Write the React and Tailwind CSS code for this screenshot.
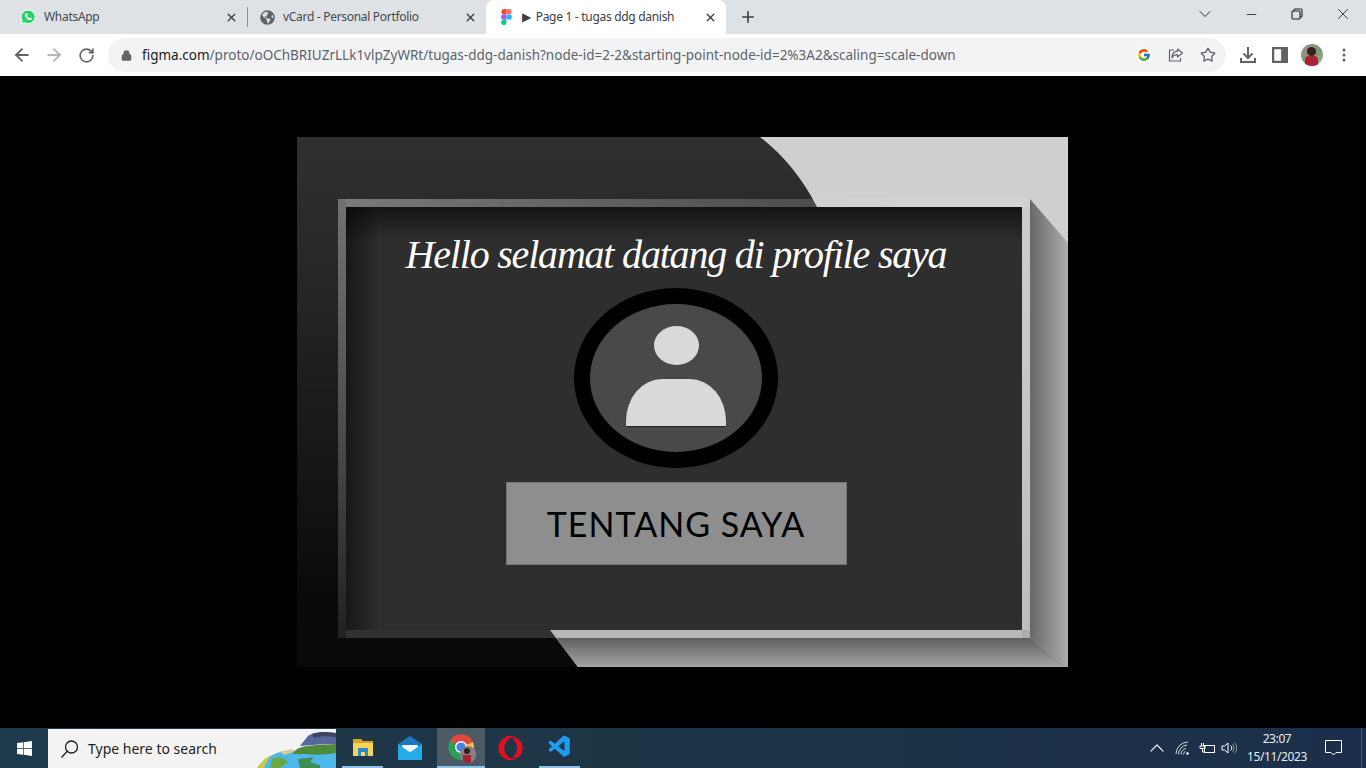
import React from "react";
import { ArrowLeft, ArrowRight, RotateCw, Lock, Star, X, Plus, ChevronDown, Minus, ChevronUp } from "lucide-react";
import { FaGlobeAmericas, FaWindows, FaOpera } from "react-icons/fa";
import { FcGoogle } from "react-icons/fc";
import { VscVscode } from "react-icons/vsc";

const UI = "font-['Noto_Sans','Open_Sans',sans-serif]";

function Tab({ icon, title, active, sep, width }) {
  return (
    <div className={`relative flex h-full shrink-0 items-center pl-3 pr-[9px] ${width} ${active ? "rounded-t-lg bg-white text-[#3c4043]" : "text-[#45494d]"}`}>
      <span className="flex w-4 shrink-0 items-center justify-center">{icon}</span>
      <span className="ml-2 flex-1 truncate text-xs tracking-[-0.3px]">{title}</span>
      <X size={13} strokeWidth={2.6} className="shrink-0 text-[#3c4043]" />
      {sep && <span className="absolute -right-px top-[7px] h-5 w-px bg-[#8b8f93]" />}
    </div>
  );
}

function WhatsAppLogo() {
  return (
    <svg width="16" height="16" viewBox="0 0 16 16">
      <path d="M8 .500a7.300 7.300 0 0 0-6.300 11L.800 15.300l3.900-1A7.300 7.300 0 1 0 8 .500z" fill="#fff" />
      <path d="M8 1.500a6.400 6.400 0 0 0-5.400 9.800L2 14l2.800-.7A6.400 6.400 0 1 0 8 1.500z" fill="#25d366" />
      <path d="M5.600 4.400c-1.100.8-.8 2.900 1 4.800s3.900 2.400 4.900 1.300c.4-.5.400-1 .2-1.200l-1.500-.8-.8.800c-.9-.3-1.900-1.300-2.300-2.200l.7-.8-.7-1.700c-.2-.3-.9-.4-1.500-.2z" fill="#fff" />
    </svg>
  );
}

function FigmaLogo() {
  return (
    <svg width="11" height="16" viewBox="0 0 11 16">
      <path d="M5.500 0H2.750a2.670 2.670 0 0 0 0 5.330H5.500z" fill="#f24e1e" />
      <path d="M5.500 0h2.750a2.670 2.670 0 0 1 0 5.330H5.500z" fill="#ff7262" />
      <path d="M5.500 5.330H2.750a2.670 2.670 0 0 0 0 5.340H5.500z" fill="#a259ff" />
      <circle cx="8.200" cy="8" r="2.670" fill="#1abcfe" />
      <path d="M2.750 10.670H5.500v2.660a2.700 2.700 0 1 1-2.750-2.660z" fill="#0acf83" />
    </svg>
  );
}

function WindowControls() {
  return (
    <div className="ml-auto flex h-full items-start text-[#1f1f1f]">
      <div className="flex h-7 w-[46px] items-center justify-center"><ChevronDown size={20} strokeWidth={1.1} /></div>
      <div className="flex h-7 w-[46px] items-center justify-center"><Minus size={15} strokeWidth={1.3} /></div>
      <div className="flex h-7 w-[46px] items-center justify-center">
        <svg width="12" height="12" viewBox="0 0 12 12" fill="none" stroke="currentColor" strokeWidth="1.100">
          <rect x="1" y="3" width="8" height="8" rx="1" /><path d="M3 3V2a1 1 0 0 1 1-1h6a1 1 0 0 1 1 1v6a1 1 0 0 1-1 1H9" />
        </svg>
      </div>
      <div className="flex h-7 w-[46px] items-center justify-center"><X size={18} strokeWidth={1.1} /></div>
    </div>
  );
}

function Toolbar() {
  return (
    <div className={`flex h-[42px] shrink-0 items-center bg-white pl-[12px] ${UI}`}>
      <ArrowLeft size={20} strokeWidth={2.2} className="text-[#5f6368]" />
      <ArrowRight size={20} strokeWidth={2.2} className="ml-3 text-[#b3b6ba]" />
      <RotateCw size={17} strokeWidth={2.3} className="ml-[14px] text-[#5f6368]" />
      <div className="ml-[13px] flex h-[34px] w-[1118px] items-center rounded-full bg-[#f1f3f4] pl-[13px]">
        <Lock size={11} strokeWidth={3} className="text-[#5f6368]" fill="#5f6368" />
        <div className="ml-[10px] pt-[2px] text-[13.5px] leading-none tracking-[0.005px] text-[#5f6368]">
          <span className="text-[#202124]">figma.com</span>/proto/oOChBRIUZrLLk1vlpZyWRt/tugas-ddg-danish?node-id=2-2&amp;starting-point-node-id=2%3A2&amp;scaling=scale-down
        </div>
        <div className="ml-auto flex items-center gap-4 pr-[10px] text-[#5f6368]">
          <span className="flex h-4 w-4 items-center justify-center rounded-full bg-white"><FcGoogle size={14} /></span>
          <svg width="16" height="16" viewBox="0 0 16 16" fill="none" stroke="#5f6368" strokeWidth="1.200">
            <path d="M6 3H1.500v11h11v-3" /><path d="M9.500 2l5 4-5 4V7.700C7 7.700 5 8.600 4 11c0-4 2-6.500 5.500-6.800z" strokeLinejoin="round" />
          </svg>
          <Star size={16} strokeWidth={1.9} />
        </div>
      </div>
      <div className="ml-[14px] flex items-center text-[#5f6368]">
        <svg width="16" height="16" viewBox="0 0 16 16" fill="none" stroke="currentColor" strokeWidth="2">
          <path d="M8 0v10M3.500 6.500L8 11l4.500-4.500M1 11v4h14v-4" />
        </svg>
        <svg className="ml-4" width="16" height="16" viewBox="0 0 14 14">
          <path fillRule="evenodd" d="M0 0h14v14H0zM2 2v10h6V2z" fill="#5f6368" />
        </svg>
        <span className="relative ml-[13px] h-[22px] w-[22px] overflow-hidden rounded-full bg-[linear-gradient(135deg,#a98aa0,#7f9a6a_55%,#a5b5a8)]">
          <span className="absolute left-[6px] top-[3px] h-[9px] w-[9px] rounded-full bg-[#35211e]" />
          <span className="absolute bottom-0 left-[4px] h-[10px] w-[13px] rounded-t bg-[#b02035]" />
        </span>
        <svg className="ml-[19px]" width="4" height="14" viewBox="0 0 4 14" fill="#5f6368">
          <circle cx="2" cy="2" r="1.500" /><circle cx="2" cy="7" r="1.500" /><circle cx="2" cy="12" r="1.500" />
        </svg>
      </div>
    </div>
  );
}

function Art() {
  return (
    <svg className="absolute inset-0 h-full w-full" viewBox="0 0 771 530">
      <defs>
        <linearGradient id="sr" gradientUnits="userSpaceOnUse" x1="733" y1="0" x2="771" y2="0">
          <stop offset="0" stopColor="#686868" /><stop offset="1" stopColor="#acacac" />
        </linearGradient>
        <linearGradient id="sb" gradientUnits="userSpaceOnUse" x1="0" y1="501" x2="0" y2="530">
          <stop offset="0" stopColor="#5e5e5e" /><stop offset="1" stopColor="#a6a6a6" />
        </linearGradient>
      </defs>
      <path d="M463 0Q498 27 520 70L253 493L281 530H771V0Z" fill="#cfcfcf" />
      <path d="M733 62L771 106V530L733 501Z" fill="url(#sr)" />
      <path d="M259 501H733L771 530H281Z" fill="url(#sb)" />
    </svg>
  );
}

function Avatar() {
  return (
    <div className="mt-[4px] flex h-[180px] w-[204px] shrink-0 flex-col items-center rounded-[50%] border-[16px] border-black bg-[#494949] pt-[22px]">
      <div className="h-[39px] w-[45px] rounded-[50%] bg-[#d9d9d9]" />
      <div className="mt-[14px] h-[47px] w-[100px] bg-[#d9d9d9] shadow-[0_1px_1px_#222] [border-radius:36px_36px_0_0/42px_42px_0_0]" />
    </div>
  );
}

function Design() {
  return (
    <div className="relative flex h-[530px] w-[771px] bg-[linear-gradient(180deg,#303030,#272727_25%,#0a0a0a_88%,#090909)] pb-[29px] pl-[41px] pr-[38px] pt-[62px]">
      <Art />
      <div className="relative flex flex-1 p-2 [background:linear-gradient(90deg,#0000_8px,#dadada70_8px,#dadada30_70%,#dadada60)_top/100%_8px_no-repeat,linear-gradient(90deg,#0000_8px,#88888850_8px)_bottom/100%_8px_no-repeat,linear-gradient(180deg,#888888c0,#88888830)_left/8px_100%_no-repeat,linear-gradient(180deg,#88888808,#88888840)_right/8px_100%_no-repeat]">
        <div className="flex flex-1 flex-col items-center bg-[#2e2e2e] bg-[linear-gradient(180deg,#00000090,#00000000_34px),linear-gradient(90deg,#00000080,#00000000_34px)] pr-4 pt-[21px]">
          <h1 className="h-[56px] whitespace-nowrap font-['Liberation_Serif',serif] text-[40px] font-normal italic leading-[54px] tracking-[-1.2px] text-white">
            Hello selamat datang di profile saya
          </h1>
          <Avatar />
          <button className="mt-[14px] flex h-[83px] w-[341px] shrink-0 items-center justify-center border border-[#747474] bg-[#8e8e8e] font-['Lato',sans-serif] text-[34px] tracking-[1px] text-black">
            TENTANG SAYA
          </button>
        </div>
      </div>
    </div>
  );
}

function SearchArt() {
  return (
    <svg className="absolute bottom-0 right-0" width="82" height="39" viewBox="0 0 82 39">
      <path d="M3 39C10 30 20 24 30 22L82 20V39Z" fill="#4fb8ea" />
      <path d="M3 39C8 32 12 28 18 26C14 30 12 35 10 39Z" fill="#c8c84a" />
      <path d="M26 23L38 20L40 23L30 26Z" fill="#d9c79a" />
      <path d="M43 20C50 17 56 16 82 15V24C70 26 60 26 52 25L38 25Z" fill="#4d8a3a" />
      <path d="M46 17L54 7C58 3 70 3 82 4V15C66 15 56 16 46 17Z" fill="#56669a" />
      <path d="M58 5C66 2 74 3 82 4V8C74 7 66 7 60 9Z" fill="#3a4660" />
      <path d="M18 30C24 27 30 29 34 33L26 39H16Z" fill="#6aa842" />
      <path d="M44 30L60 28L56 33L66 36V39H46Z" fill="#3f8e55" />
    </svg>
  );
}

function ChromeIcon() {
  return (
    <span className="relative h-[26px] w-[26px]">
      <svg width="26" height="26" viewBox="0 0 26 26" className="absolute left-0 top-0">
        <path d="M13 13L2 6.500A13 13 0 0 1 25 8z" fill="#e2483d" />
        <path d="M13 13L25 8A13 13 0 0 1 13 26z" fill="#f5c33b" />
        <path d="M13 13L13 26A13 13 0 0 1 2 6.500z" fill="#2f9e55" />
        <circle cx="13" cy="13" r="6" fill="#fff" /><circle cx="13" cy="13" r="4.600" fill="#3f82ee" />
      </svg>
      <span className="absolute -bottom-[3px] -right-[2px] h-[17px] w-[16px] overflow-hidden rounded-full bg-[#8a7d86]">
        <span className="absolute left-1 top-[2px] h-[6px] w-[6px] rounded-full bg-[#32201d]" />
        <span className="absolute bottom-0 left-[3px] h-2 w-2 bg-[#a81f32]" />
      </span>
    </span>
  );
}

function TaskIcon({ children, w, cls = "" }) {
  return <div className={`flex h-full shrink-0 items-center justify-center ${w} ${cls}`}>{children}</div>;
}

function Taskbar() {
  return (
    <div className={`flex h-10 shrink-0 items-stretch bg-[linear-gradient(90deg,#1e3a4c,#1e3546_45%,#1b2f4a)] ${UI}`}>
      <TaskIcon w="w-12"><FaWindows size={17} className="text-white" /></TaskIcon>
      <div className="relative mt-px flex w-[288px] items-center overflow-hidden bg-[#f3f3f3] pl-3">
        <svg width="20" height="20" viewBox="0 0 20 20" fill="none" stroke="#1f1f1f" strokeWidth="1.300">
          <circle cx="11.500" cy="8" r="6" /><path d="M7 12.500L1.500 18.500" />
        </svg>
        <span className="ml-2 text-[14px] text-[#1f1f1f]">Type here to search</span>
        <SearchArt />
      </div>
      <TaskIcon w="w-[6px]" />
      <TaskIcon w="w-[41px]" cls="border-b-2 border-[#8cc3e6]">
        <svg width="22" height="20" viewBox="0 0 22 20">
          <path d="M1 2h8l2 2h10v3H1z" fill="#d9a520" /><path d="M1 6h20v13H1z" fill="#f8d35e" />
          <path d="M6 11h10v8h-3v-4H9v4H6z" fill="#2a8ad4" />
        </svg>
      </TaskIcon>
      <TaskIcon w="w-[54px]">
        <svg width="24" height="24" viewBox="0 0 24 24">
          <path d="M0 8L12 0l12 8v16H0z" fill="#1878c0" />
          <path d="M4 9h16v2.500l-8 5-8-5z" fill="#eef7fc" />
          <path d="M0 8l12 8.500L24 8v16H0z" fill="#25ace8" />
        </svg>
      </TaskIcon>
      <TaskIcon w="w-[48px]" cls="border-b-2 border-[#8cc3e6] bg-[#4b5b66]"><ChromeIcon /></TaskIcon>
      <TaskIcon w="w-[50px]"><FaOpera size={25} className="text-[#e4101f]" /></TaskIcon>
      <TaskIcon w="w-[4px]" />
      <TaskIcon w="w-[41px]" cls="border-b-2 border-[#8cc3e6]"><VscVscode size={26} className="text-[#1f9cf0]" /></TaskIcon>
      <div className="ml-auto flex items-center text-[#e8edf0]">
        <ChevronUp size={24} strokeWidth={1.2} />
        <svg className="ml-[6px]" width="15" height="15" viewBox="0 0 15 15" fill="none" stroke="#cfd6dc" strokeWidth="1">
          <path d="M1 13A12 12 0 0 1 13 1M3.500 13.500A9.500 9.500 0 0 1 12 4M6 13.500A6.500 6.500 0 0 1 11 7.500M8.500 13.500a3 3 0 0 1 2-3" /><circle cx="12.500" cy="12.500" r="1.300" fill="#fff" stroke="none" />
        </svg>
        <svg className="ml-[9px]" width="17" height="13" viewBox="0 0 17 13" fill="none" stroke="#fff" strokeWidth="1">
          <rect x="5.500" y="3.500" width="10" height="7" /><path d="M2.500 1v3M4.500 1v3M1 4h5v2.500H1zM3.500 7v3h2" />
        </svg>
        <svg className="ml-[5px]" width="17" height="14" viewBox="0 0 17 14" fill="none" stroke="#fff" strokeWidth="1">
          <path d="M1 5h2.500L7 2v10L3.500 9H1z" /><path d="M9.500 4.500a3 3 0 0 1 0 5" /><path d="M11.500 3a6 6 0 0 1 0 8M13.500 1.500a8 8 0 0 1 0 11" stroke="#8a949c" />
        </svg>
        <div className="ml-[4px] flex w-[70px] flex-col items-center text-xs leading-[18px] tracking-[-0.4px]">
          <span>23:07</span><span>15/11/2023</span>
        </div>
        <div className="ml-px flex w-10 justify-center">
          <svg width="17" height="16" viewBox="0 0 17 16" fill="none" stroke="#fff" strokeWidth="1">
            <path d="M.500.500h16v12h-5.500L8.500 15 6 12.500H.500z" />
          </svg>
        </div>
        <span className="ml-2 h-full w-[5px] border-l border-[#46586a]" />
      </div>
    </div>
  );
}

export default function App() {
  return (
    <div className="flex h-screen w-full flex-col overflow-hidden bg-black">
      <div className={`flex h-[34px] shrink-0 items-stretch bg-[#dee1e6] pl-2 ${UI}`}>
        <Tab width="w-[239px]" sep title="WhatsApp" icon={<WhatsAppLogo />} />
        <Tab width="w-[239px]" title="vCard - Personal Portfolio" icon={<FaGlobeAmericas size={15} className="text-[#5f6368]" />} />
        <Tab width="w-[240px]" active title={<><span className="mr-[5px]">▶</span>Page 1 - tugas ddg danish</>} icon={<FigmaLogo />} />
        <Plus size={18} strokeWidth={2.2} className="ml-[13px] self-center text-[#3c4043]" />
        <WindowControls />
      </div>
      <Toolbar />
      <main className="flex min-h-0 flex-1 items-center justify-center bg-black pr-px">
        <Design />
      </main>
      <Taskbar />
    </div>
  );
}
